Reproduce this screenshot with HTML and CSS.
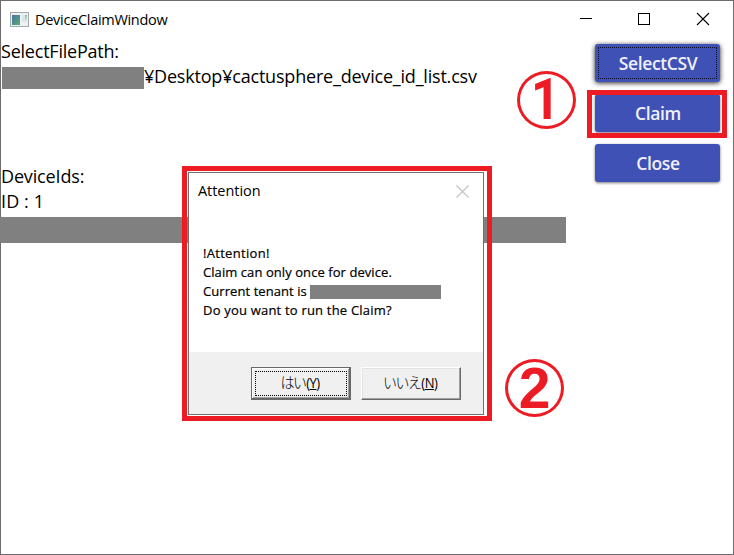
FILE: index.html
```
<!DOCTYPE html>
<html lang="ja">
<head>
<meta charset="utf-8">
<title>DeviceClaimWindow</title>
<link rel="stylesheet" href="styles.css">
</head>
<body>
<div class="window">
  <header class="titlebar">
    <svg class="app-icon" width="19" height="15" viewBox="0 0 19 15">
      <defs>
        <linearGradient id="pane" x1="0" y1="0" x2="1" y2="1"><stop offset="0" stop-color="#4b74a5"/><stop offset="1" stop-color="#54ad72"/></linearGradient>
        <linearGradient id="side" x1="0" y1="0" x2="0" y2="1"><stop offset="0" stop-color="#83c596"/><stop offset="1" stop-color="#e7edf1"/></linearGradient>
      </defs>
      <rect x=".5" y=".5" width="18" height="14" fill="#eef1f4" stroke="#a4a9ad"/>
      <rect x="2" y="3" width="8" height="10" fill="url(#pane)"/>
      <rect x="12" y="3" width="5" height="7" fill="#dce5ec"/>
      <rect x="15" y="3" width="2" height="7" fill="url(#side)"/>
    </svg>
    <h1 class="title">DeviceClaimWindow</h1>
    <svg class="controls" width="126" height="14" viewBox="0 0 126 14" fill="none" stroke="#000" shape-rendering="crispEdges">
      <path d="M0 6.500h12M58.500 1.500h11v11h-11z"/>
      <path d="M117 1l12 12M129 1l-12 12" shape-rendering="auto" stroke-width="1.1"/>
    </svg>
  </header>
  <main class="content">
    <section class="info">
      <p class="line label-path">SelectFilePath:</p>
      <p class="line path"><span class="mask mask-user"></span><span class="path-text">¥Desktop¥cactusphere_device_id_list.csv</span></p>
      <p class="line label-ids">DeviceIds:</p>
      <p class="line id-count">ID : 1</p>
      <div class="mask mask-id"></div>
    </section>
    <nav class="actions">
      <button class="action focused">SelectCSV</button>
      <button class="action claim">Claim</button>
      <button class="action">Close</button>
    </nav>
  </main>
</div>
<div class="dialog-outline">
  <div class="dialog">
    <div class="dialog-title"><span class="attention">Attention</span>
      <svg width="13" height="13" viewBox="0 0 13 13" stroke="#c3c3c3" stroke-width="1.2"><path d="M.5 .5l12 12M12.500 .5l-12 12"/></svg>
    </div>
    <div class="message">
      <p class="m1">!Attention!</p>
      <p class="m2">Claim can only once for device.</p>
      <p class="m3"><span>Current tenant is</span><span class="mask mask-tenant"></span></p>
      <p class="m4">Do you want to run the Claim?</p>
    </div>
    <div class="dialog-footer">
      <button class="choice yes"><span class="focus"><span class="label"><span class="jp">はい</span>(<u>Y</u>)</span></span></button>
      <button class="choice no"><span class="label"><span class="jp">いいえ</span>(<u>N</u>)</span></button>
    </div>
  </div>
</div>
<div class="callout one"><span>1</span></div>
<div class="callout two"><span>2</span></div>
</body>
</html>
```
FILE: styles.css
```
* { box-sizing: border-box; }
body { margin: 0; width: 734px; height: 555px; overflow: hidden; background: #fff; color: #000; font-family: "Open Sans", "Noto Sans CJK JP", sans-serif; }
p, h1 { margin: 0; }
button { padding: 0; font-family: inherit; }
.window { width: 734px; height: 555px; border: 1px solid #6d6b6e; display: flex; flex-direction: column; }
.titlebar { height: 38px; display: flex; align-items: center; padding-left: 9px; padding-right: 27px; }
.app-icon { margin-right: 6px; margin-top: -2px; }
.title { font-size: 14.5px; font-weight: 400; line-height: 20px; letter-spacing: -.29px; }
.controls { margin-left: auto; overflow: visible; margin-top: -2px; }
.content { display: flex; justify-content: space-between; }
.info { width: 566px; margin-left: -1px; }
.line { height: 25px; line-height: 25px; font-size: 18px; white-space: nowrap; padding-left: 1px; letter-spacing: -.22px; }
.path { display: flex; align-items: center; }
.path-text { letter-spacing: -.2px; }
.mask { background: #808080; display: block; }
.mask-user { width: 142px; height: 22px; margin-left: 1px; margin-top: 2px; }
.label-ids { margin-top: 75px; letter-spacing: -.15px; }
.id-count { letter-spacing: .1px; }
.mask-id { height: 26px; margin-top: 3px; }
.actions { width: 125px; margin: 5px 13px 0 0; display: flex; flex-direction: column; gap: 12px; }
.action { height: 38px; border: 0; border-radius: 3px; background: #3f51b5; color: #f0f0fa; font-size: 17.5px; font-weight: 600; letter-spacing: -.35px; line-height: 38px; padding-left: 1px; box-shadow: 0 1px 3px #777; position: relative; }
.focused { box-shadow: 0 1px 5px #222; }
.focused::after { content: ""; position: absolute; inset: 3px; border: 1px dotted #080a20; }
.claim::after { content: ""; box-sizing: border-box; position: absolute; left: -8px; top: -4px; width: 140px; height: 48px; border: 5px solid #ed1c24; }
.dialog-outline { position: absolute; left: 182px; top: 166px; width: 310px; height: 255px; border: 5px solid #ed1c24; padding: 1px; }
.dialog { width: 296px; height: 243px; border: 1px solid #707070; background: #fff; display: flex; flex-direction: column; }
.dialog-title { height: 38px; display: flex; align-items: center; justify-content: space-between; padding: 0 14px 2px 9px; font-size: 14.5px; line-height: 20px; }
.attention { letter-spacing: -.05px; }
.message { height: 141px; padding: 33px 0 0 14px; font-size: 13px; letter-spacing: .07px; color: #000; -webkit-text-stroke: .2px #000; }
.m1 { letter-spacing: .3px; }
.m4 { letter-spacing: .2px; }
.message p { height: 19px; line-height: 19px; white-space: nowrap; }
.message .m3 { display: flex; align-items: center; }
.mask-tenant { width: 131px; height: 14px; margin: 1px 42px 0 auto; }
.dialog-footer { flex: 1; background: #f0f0f0; display: flex; justify-content: flex-end; gap: 10px; padding: 15px 22px 0 0; }
.choice { width: 100px; height: 33px; background: #f0f0f0; color: #000; font-size: 14px; border: 1px solid; border-color: #fff #696969 #696969 #fff; box-shadow: inset -1px -1px #a0a0a0, inset 1px 1px #e3e3e3; }
.label { display: inline-block; line-height: 23px; letter-spacing: -.6px; transform: translate(-1px, -2px) scaleX(.93); }
.no .label { transform: translate(-1px, -2px) scaleX(.93); }
.jp { font-family: "Noto Sans CJK JP", sans-serif; font-size: 15px; font-weight: 300; letter-spacing: -1.6px; margin-right: 1px; }
.yes { border-color: #696969; box-shadow: inset -1px -1px #696969, inset 1px 1px #fff, inset -2px -2px #a0a0a0; }
.focus { display: block; height: 25px; line-height: 23px; margin: 0 3px; border: 1px dotted #000; }
.callout { position: absolute; width: 59px; height: 58px; border: 3px solid #ed1c24; border-radius: 50%; color: #ed1c24; font-family: "Liberation Sans", sans-serif; font-weight: 700; font-size: 57px; line-height: 54px; text-align: center; }
.callout span { display: block; transform: translateY(-1px); }
.one { left: 517px; top: 71px; font-family: Roboto, sans-serif; }
.one span { transform: translate(-1px, -1px) scaleX(.88); }
.two { left: 505px; top: 359px; }
```
